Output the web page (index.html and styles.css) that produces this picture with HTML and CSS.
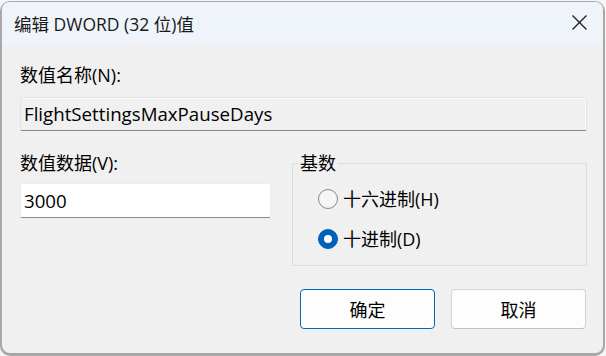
FILE: index.html
```html
<!DOCTYPE html>
<html lang="zh-cn">
<head>
	<meta charset="UTF-8">
	<title>编辑 DWORD (32 位)值</title>
	<link rel="stylesheet" href="styles.css">
</head>
<body>

	<div class="window">
		<div class="titlebar">
			<span class="title">编辑 DWORD (32 位)值</span>
			<span class="close">
				<svg width="15" height="15" viewBox="0 0 15 15"><path d="M0.5 0.5L14.5 14.5M14.5 0.5L0.5 14.5" stroke="#1a1a1a" stroke-width="1.3" fill="none"/></svg>
			</span>
		</div>

		<div class="content">
			<div class="label">数值名称(N):</div>
			<div class="field readonly">FlightSettingsMaxPauseDays</div>

			<div class="row">
				<div class="col">
					<div class="label">数值数据(V):</div>
					<div class="field edit">3000</div>
				</div>
				<fieldset class="group">
					<legend>基数</legend>
					<div class="option"><span class="radio"></span>十六进制(H)</div>
					<div class="option"><span class="radio checked"></span>十进制(D)</div>
				</fieldset>
			</div>

			<div class="buttons">
				<button class="btn primary">确定</button>
				<button class="btn">取消</button>
			</div>
		</div>
	</div>

</body>
</html>
```

FILE: styles.css
```css
* {padding: 0; margin: 0; box-sizing: border-box;}
html, body {width: 606px; height: 356px; overflow: hidden;}
body {background: #f6f6f6; font-family: "Open Sans", "Noto Sans CJK SC", sans-serif; font-size: 18px; color: #000;}

.window {margin: 2px 3px 0 2px; height: 351px; background: #f0f0f0; border-radius: 8px; box-shadow: 0 1px 0 2px #a8a8a8; overflow: hidden;}

.titlebar {height: 43px; padding: 0 16px 0 12px; background: #eef4f9; display: flex; align-items: center; justify-content: space-between;}
.title {line-height: 24px; color: #1a1a1a; font-size: 17.5px;}
.close {display: flex; margin-bottom: 2px;}

.content {padding: 18px 16px 0 18px;}
.label {line-height: 24px; height: 24px;}

.field {display: flex; align-items: center; padding-left: 3px; line-height: 24px; font-size: 18.7px; border: 1px solid #e3e3e3; border-bottom-color: #868686; border-radius: 2px;}
.field.readonly {margin-top: 10px; height: 34px; background: #f0f0f0; box-shadow: inset -1px 1px 0 #fbfbfb;}
.field.edit {margin-top: 8px; height: 35px; background: #fff; border-color: #ececec; border-bottom-color: #8a8a8a;}

.row {margin-top: 20px; display: flex;}
.col {width: 251px;}

.group {margin-left: 21px; width: 295px; padding: 0 0 14px 5px; border: 1px solid #dcdcdc; min-width: 0;}
.group legend {padding: 0 2px; line-height: 24px;}

.option {display: flex; align-items: center; gap: 5px; padding-left: 20px; line-height: 24px; height: 24px;}
.option:first-of-type {margin-top: 12px;}
.option + .option {margin-top: 16px;}

.radio {width: 20px; height: 20px; border: 1px solid #858585; border-radius: 50%; background: #f6f6f6; display: flex; align-items: center; justify-content: center;}
.radio.checked {background: #005fb8; border-color: #005fb8;}
.radio.checked::after {content: ""; width: 8px; height: 8px; border-radius: 50%; background: #fff;}

.buttons {margin-top: 23px; padding-right: 1px; display: flex; justify-content: flex-end; gap: 16px;}
.btn {width: 135px; height: 40px; font: inherit; color: #000; background: #fdfdfd; border: 1px solid #d2d2d2; border-bottom-color: #c2c2c2; border-radius: 4px;}
.btn.primary {border: 1px solid #0067c0;}
```
